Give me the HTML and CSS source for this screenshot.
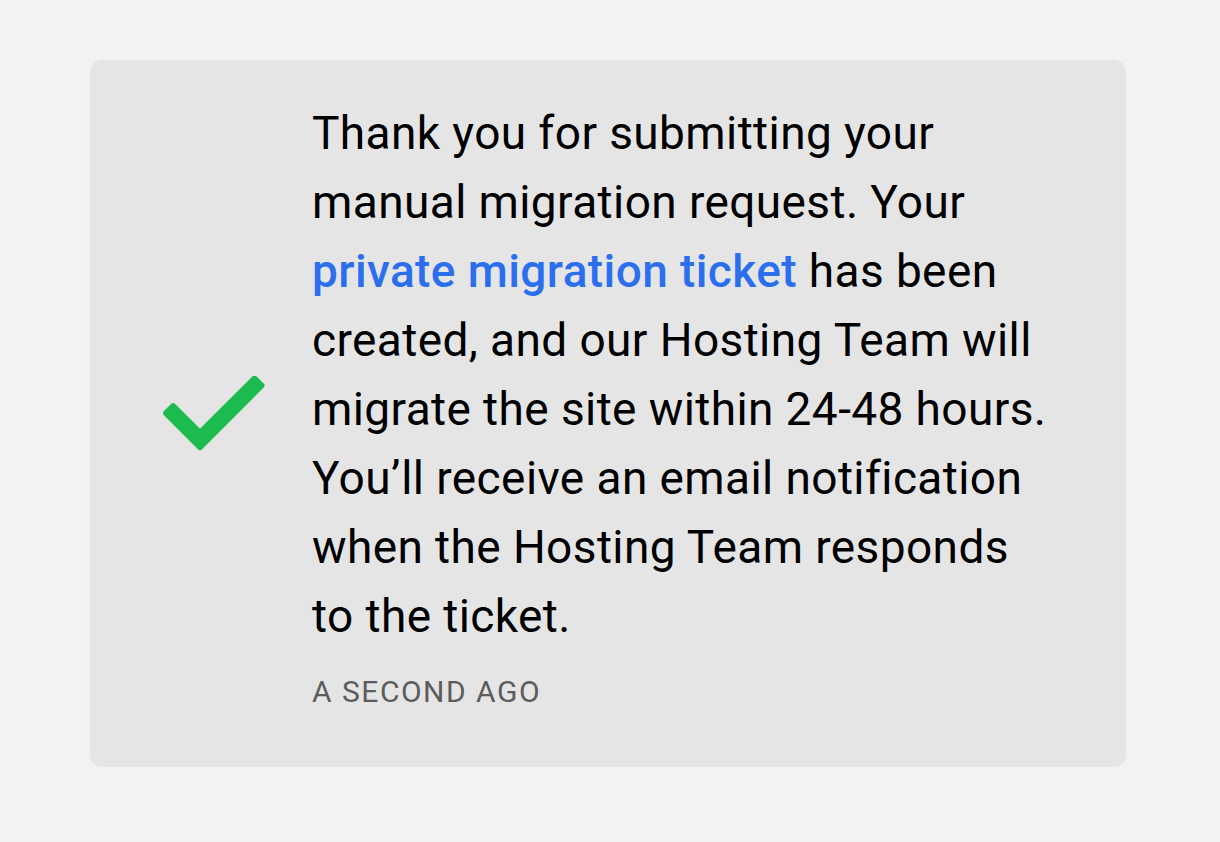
FILE: index.html
```html
<!DOCTYPE html>
<html lang="en">
<head>
<meta charset="utf-8">
<title>Migration request</title>
<link rel="stylesheet" href="styles.css">
</head>
<body>
<div class="page">
  <div class="card">
    <div class="icon">
      <svg width="104" height="76" viewBox="0 0 104 76" aria-hidden="true">
        <polygon points="4.1,37.1 38,71.1 99.5,9.5 92.5,2.5 38,56.9 11.1,30.1" fill="#1dbb4f" stroke="#1dbb4f" stroke-width="6" stroke-linejoin="round"/>
      </svg>
    </div>
    <div class="body">
      <p class="message">Thank you for submitting your manual migration request. Your <a class="link" href="#">private migration ticket</a> has been created, and our Hosting Team will migrate the site within 24-48 hours. You’ll receive an email notification when the Hosting Team responds to the ticket.</p>
      <div class="time">A SECOND AGO</div>
    </div>
  </div>
</div>
</body>
</html>
```
FILE: styles.css
```css
html, body {
  margin: 0;
  padding: 0;
  background: #f2f2f2;
}
body {
  font-family: Roboto, "Liberation Sans", sans-serif;
  color: #111;
}
.page {
  padding: 60px 94px 0 90px;
}
.card {
  width: 1036px;
  box-sizing: border-box;
  height: 707px;
  background: #e5e5e5;
  border-radius: 12px;
  display: flex;
  align-items: center;
  padding: 0 75px 0 72px;
}
.icon {
  width: 104px;
  flex: none;
  display: flex;
  margin-right: 46px;
}
.icon svg {
  display: block;
}
.body {
  flex: 1;
  padding-top: 39px;
  padding-bottom: 52px;
  align-self: stretch;
}
.message {
  margin: 0;
  font-size: 46px;
  font-weight: 400;
  letter-spacing: 0.4px;
  line-height: 69px;
  color: #000;
}
.link {
  color: #2b6fef;
  text-decoration: none;
  font-weight: 500;
}
.time {
  margin-top: 18px;
  font-size: 30px;
  line-height: 45px;
  letter-spacing: 1.5px;
  color: #5c5c5c;
}
```
